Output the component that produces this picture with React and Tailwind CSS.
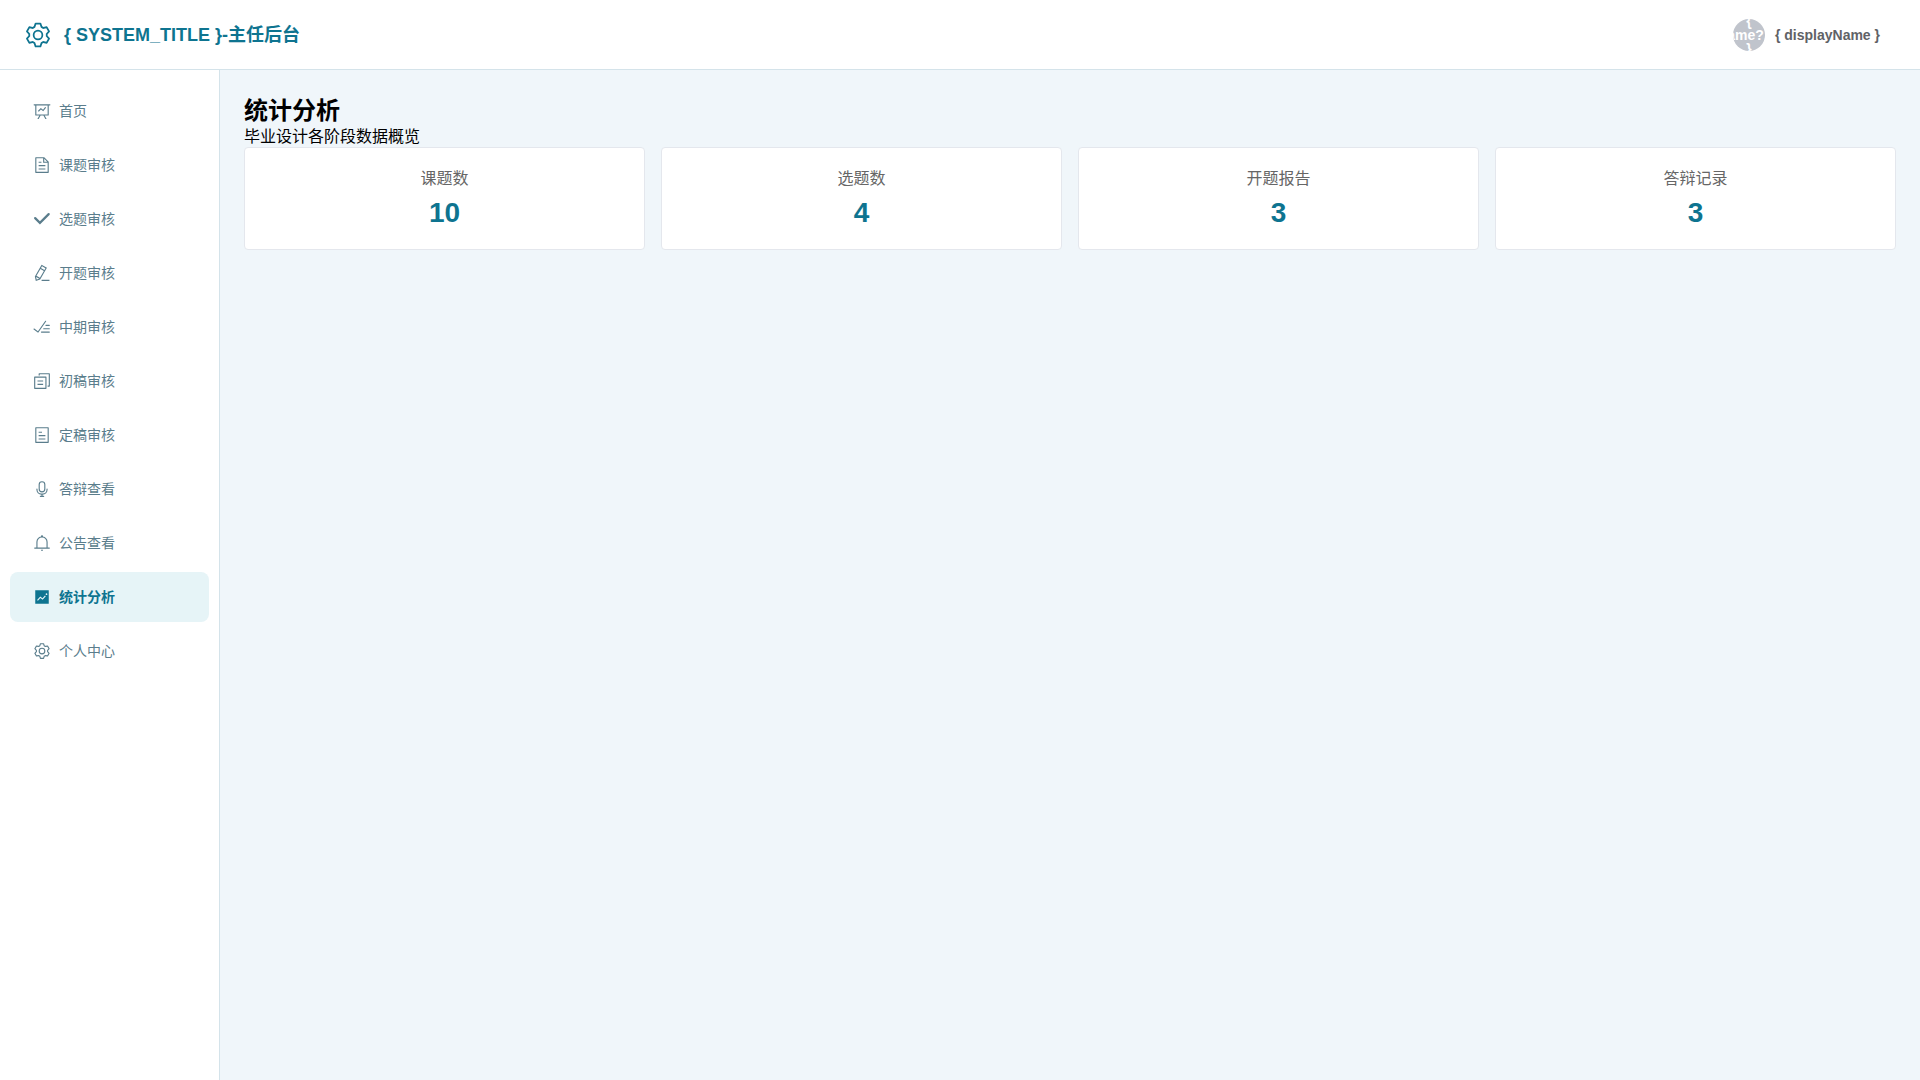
import React from 'react';

const icons = {
  dataLine: 'M359.168 768H160a32 32 0 0 1-32-32V192H64a32 32 0 0 1 0-64h896a32 32 0 1 1 0 64h-64v544a32 32 0 0 1-32 32H665.216l110.848 192h-73.856L591.36 768H433.024L322.176 960H248.32zM832 192H192v512h640zM342.656 534.656a32 32 0 1 1-45.312-45.312L444.992 341.76l125.44 94.08L679.04 300.032a32 32 0 1 1 49.92 39.936L581.632 524.224 451.008 426.24z',
  document: 'M832 384H576V128H192v768h640zm-26.496-64L640 154.496V320zM160 64h480l256 256v608a32 32 0 0 1-32 32H160a32 32 0 0 1-32-32V96a32 32 0 0 1 32-32m160 448h384v64H320zm0-192h160v64H320zm0 384h384v64H320z',
  select: 'M77.248 415.04a64 64 0 0 1 90.496 0l226.304 226.304L846.528 188.8a64 64 0 1 1 90.56 90.496l-543.04 543.04-316.8-316.8a64 64 0 0 1 0-90.496z',
  editPen: 'm199.04 672.64 193.984 112 224-387.968-193.92-112-224 388.032zm-23.872 60.16 32.896 148.288 144.896-45.696zM455.04 229.248l193.92 112 56.704-98.112-193.984-112zM104.32 708.8l384-665.024 304.768 175.936L409.152 884.8h.064l-248.448 78.336zm384 254.272v-64h448v64z',
  finished: 'M280.768 753.728 691.456 167.04a32 32 0 1 1 52.416 36.672L314.24 817.472a32 32 0 0 1-45.44 7.296l-230.4-172.8a32 32 0 0 1 38.4-51.2zM736 448a32 32 0 1 1 0-64h192a32 32 0 1 1 0 64zM608 640a32 32 0 0 1 0-64h319.936a32 32 0 1 1 0 64zM480 832a32 32 0 1 1 0-64h447.936a32 32 0 1 1 0 64z',
  copy: 'M128 320v576h576V320zm-32-64h640a32 32 0 0 1 32 32v640a32 32 0 0 1-32 32H96a32 32 0 0 1-32-32V288a32 32 0 0 1 32-32M960 96v704a32 32 0 0 1-32 32h-96v-64h64V128H384v64h-64V96a32 32 0 0 1 32-32h576a32 32 0 0 1 32 32M256 672h320v64H256zm0-192h320v64H256z',
  tickets: 'M192 128v768h640V128zm-32-64h704a32 32 0 0 1 32 32v832a32 32 0 0 1-32 32H160a32 32 0 0 1-32-32V96a32 32 0 0 1 32-32m160 448h384v64H320zm0-192h192v64H320zm0 384h384v64H320z',
  microphone: 'M512 128a128 128 0 0 0-128 128v256a128 128 0 1 0 256 0V256a128 128 0 0 0-128-128m0-64a192 192 0 0 1 192 192v256a192 192 0 1 1-384 0V256A192 192 0 0 1 512 64m-32 832v-64a288 288 0 0 1-288-288v-32a32 32 0 0 1 64 0v32a224 224 0 0 0 224 224h64a224 224 0 0 0 224-224v-32a32 32 0 1 1 64 0v32a288 288 0 0 1-288 288v64h64a32 32 0 1 1 0 64H416a32 32 0 1 1 0-64z',
  bell: 'M512 64a64 64 0 0 1 64 64v64H448v-64a64 64 0 0 1 64-64 M256 768h512V448a256 256 0 1 0-512 0zm256-640a320 320 0 0 1 320 320v384H192V448a320 320 0 0 1 320-320 M96 768h832q32 0 32 32t-32 32H96q-32 0-32-32t32-32m352 128h128a64 64 0 0 1-128 0',
  trend: 'M128 896V128h768v768zm291.712-327.296 128 102.4 180.16-201.792-47.744-42.624-139.84 156.608-128-102.4-180.16 201.792 47.744 42.624 139.84-156.608zM816 352a48 48 0 1 0-96 0 48 48 0 0 0 96 0',
  setting: 'M600.704 64a32 32 0 0 1 30.464 22.208l35.2 109.376c14.784 7.232 28.928 15.36 42.432 24.512l112.384-24.192a32 32 0 0 1 34.432 15.36L944.32 364.8a32 32 0 0 1-4.032 37.504l-77.12 85.12a357.12 357.12 0 0 1 0 49.024l77.12 85.248a32 32 0 0 1 4.032 37.504l-88.704 153.6a32 32 0 0 1-34.432 15.296L708.8 803.904c-13.44 9.088-27.648 17.28-42.368 24.512l-35.264 109.376A32 32 0 0 1 600.704 960H423.296a32 32 0 0 1-30.464-22.208L357.696 828.48a351.616 351.616 0 0 1-42.56-24.64l-112.32 24.256a32 32 0 0 1-34.432-15.36L79.68 659.2a32 32 0 0 1 4.032-37.504l77.12-85.248a357.12 357.12 0 0 1 0-48.896l-77.12-85.248A32 32 0 0 1 79.68 364.8l88.704-153.6a32 32 0 0 1 34.432-15.296l112.32 24.256c13.568-9.152 27.776-17.408 42.56-24.64l35.2-109.312A32 32 0 0 1 423.232 64H600.64zm-23.424 64H446.72l-36.352 113.088-24.512 11.968a294.113 294.113 0 0 0-34.816 20.096l-22.656 15.36-116.224-25.088-65.28 113.152 79.68 88.192-1.92 27.136a293.12 293.12 0 0 0 0 40.192l1.92 27.136-79.808 88.192 65.344 113.152 116.224-25.024 22.656 15.296a294.113 294.113 0 0 0 34.816 20.096l24.512 11.968L446.72 896h130.688l36.48-113.152 24.448-11.904a288.282 288.282 0 0 0 34.752-20.096l22.592-15.296 116.288 25.024 65.28-113.152-79.744-88.192 1.92-27.136a293.12 293.12 0 0 0 0-40.256l-1.92-27.136 79.808-88.128-65.344-113.152-116.288 24.96-22.592-15.232a287.616 287.616 0 0 0-34.752-20.096l-24.448-11.904L577.344 128zM512 320a192 192 0 1 1 0 384 192 192 0 0 1 0-384m0 64a128 128 0 1 0 0 256 128 128 0 0 0 0-256',
};

const menuList = [
  { label: '首页', icon: 'dataLine' },
  { label: '课题审核', icon: 'document' },
  { label: '选题审核', icon: 'select' },
  { label: '开题审核', icon: 'editPen' },
  { label: '中期审核', icon: 'finished' },
  { label: '初稿审核', icon: 'copy' },
  { label: '定稿审核', icon: 'tickets' },
  { label: '答辩查看', icon: 'microphone' },
  { label: '公告查看', icon: 'bell' },
  { label: '统计分析', icon: 'trend', active: true },
  { label: '个人中心', icon: 'setting' },
];

const statList = [
  { label: '课题数', value: 10 },
  { label: '选题数', value: 4 },
  { label: '开题报告', value: 3 },
  { label: '答辩记录', value: 3 },
];

function Icon({ name, className }) {
  return (
    <svg className={className} viewBox="0 0 1024 1024" fill="currentColor" aria-hidden="true">
      <path d={icons[name]}></path>
    </svg>
  );
}

function Header() {
  return (
    <header className="h-[70px] shrink-0 bg-white border-b border-[#d4e3ea] pl-6 pr-10 flex items-center justify-between">
      <div className="flex items-center gap-3 text-[#0e7490]">
        <Icon name="setting" className="w-7 h-7" />
        <span className="text-lg font-bold">{'{ SYSTEM_TITLE }-主任后台'}</span>
      </div>
      <div className="flex items-center gap-2.5 text-sm font-bold text-[#606266]">
        <div className="w-8 h-8 rounded-full bg-[#c0c4cc] text-white text-center leading-[14px] overflow-hidden flex items-center justify-center">
          <span>{'{ displayName?.charAt(0) }'}</span>
        </div>
        <span>{'{ displayName }'}</span>
      </div>
    </header>
  );
}

function Sidebar() {
  return (
    <aside className="w-[220px] shrink-0 bg-white border-r border-[#d4e3ea] px-2.5 py-4">
      <nav className="flex flex-col gap-1">
        {menuList.map((m) => (
          <a
            key={m.label}
            href="#"
            className={`h-[50px] px-5 rounded-lg flex items-center text-sm ${m.active ? 'bg-[#e6f4f7] text-[#0e7490] font-bold' : 'text-[#5a7d8c]'}`}
          >
            <span className="w-6 mr-[5px] flex justify-center">
              <Icon name={m.icon} className="w-[18px] h-[18px]" />
            </span>
            <span>{m.label}</span>
          </a>
        ))}
      </nav>
    </aside>
  );
}

export default function App() {
  return (
    <div className="min-h-screen flex flex-col font-['Liberation_Sans','Noto_Sans_CJK_SC',sans-serif]">
      <Header />
      <div className="flex flex-1">
        <Sidebar />
        <main className="flex-1 bg-[#f0f6fa] p-6 text-black">
          <h2 className="text-2xl leading-[34px] font-bold">统计分析</h2>
          <p className="mb-0.5 text-base leading-[17px]">毕业设计各阶段数据概览</p>
          <div className="grid grid-cols-4 gap-4">
            {statList.map((s) => (
              <div key={s.label} className="bg-white rounded border border-[#e4e7ed] p-5 text-center">
                <div className="text-base leading-[22px] text-[#666666]">{s.label}</div>
                <div className="mt-[7px] text-[28px] leading-8 font-bold text-[#0e7490]">{s.value}</div>
              </div>
            ))}
          </div>
        </main>
      </div>
    </div>
  );
}
